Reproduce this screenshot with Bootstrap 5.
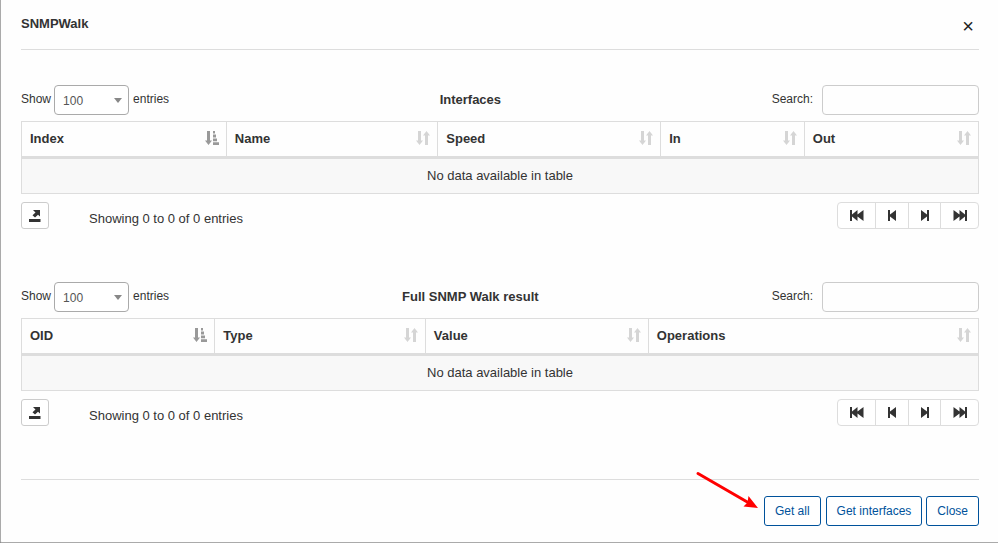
<!DOCTYPE html>
<html lang="en">
<head>
<meta charset="utf-8">
<meta name="viewport" content="width=device-width, initial-scale=1">
<title>SNMPWalk</title>
<link rel="stylesheet" href="https://cdn.jsdelivr.net/npm/bootstrap@5.3.0/dist/css/bootstrap.min.css">
<style>
  body { background: #666; color: #333; font: 13px/18px "Liberation Sans", Arial, sans-serif; }
  .dialog-pane { background: #fefefe; min-height: 100vh; padding: 0 19px 0 20px; border: 0 solid #aaa; border-width: 0 0 1px 1px; border-bottom-left-radius: 2px; }
  .dialog-head { height: 50px; border-bottom: 1px solid #ddd; }
  .dialog-head h1 { font-size: 13px; line-height: 18px; margin: 15px 0 0; font-weight: bold; }
  .dialog-x { border: 0; background: none; padding: 0; width: 22px; font-size: 20px; line-height: 20px; margin-top: 16px; color: #222; }
  .dialog-main { padding-top: 35px; }
  .walk-block { margin-bottom: 53px; }
  .walk-tools { font-size: 12px; margin-bottom: 6px; min-height: 30px; }
  .walk-tools label { line-height: 28px; }
  .walk-tools h2 { font-size: 13px; line-height: 18px; font-weight: bold; margin: 6px 0 0; }
  .walk-tools .form-select { width: 75px; height: 30px; margin: 0 4px 0 3px; font-size: 12px; line-height: 18px; padding: 6px 20px 4px 8px; border: 1px solid #aaa; border-radius: 4px; color: #555; background-color: #fff;
    background-image: url("data:image/svg+xml,%3Csvg xmlns='http://www.w3.org/2000/svg' viewBox='0 0 8 5'%3E%3Cpath d='M0 0h8L4 5z' fill='%23888'/%3E%3C/svg%3E"); background-size: 8px 5px; background-position: right 6px center; }
  .find-label { margin-right: 9px; }
  .walk-tools .form-control { width: 157px; height: 30px; padding: 4px 8px; font-size: 12px; border: 1px solid #ccc; border-radius: 4px; background: #fefefe; }
  .walk-table { width: 100%; margin: 0 0 8px; table-layout: fixed; border-collapse: separate; border-spacing: 0; border: 1px solid #ddd; border-width: 1px 0 0 1px; }
  .walk-table th, .walk-table td { height: 35px; padding: 8px; line-height: 18px; border: 0 solid #ddd; border-right-width: 1px; border-bottom-width: 1px; }
  .walk-table th { padding-right: 7px; border-bottom-width: 3px; }
  .walk-table td { background: #f8f8f8; text-align: center; }
  .sort-mark { width: 14px; height: 14px; margin-top: 1px; fill: #d5d5d5; display: block; }
  .sort-mark.is-active { fill: #999; }
  .tool-btn { border: 1px solid #ccc; background: #fff; width: 28px; height: 27px; padding: 0; border-radius: 3px; }
  .tool-btn svg, .pager-group svg { display: block; margin: auto; fill: #333; }
  .walk-info { margin: 8px 0 0 40px; }
  .pager-group .btn { height: 27px; padding: 0; border: 1px solid #ddd; background: #fff; border-radius: 4px; }
  .pager-end { width: 39px; } .pager-step { width: 34px; } .pager-next { width: 33px; }
  .dialog-foot { border-top: 1px solid #ddd; padding: 16px 0; gap: 4px; }
  .act-btn { height: 30px; padding: 0 10px; font-size: 12px; line-height: 28px; color: #00529b; border: 1px solid #00529b; border-radius: 3px; background: #fff; }
  .act-first { margin-right: 1px; }
  .pointer-arrow { right: calc(100% + 5px); bottom: 17px; width: 64px; height: 40px; pointer-events: none; }
</style>
<script src="https://cdn.jsdelivr.net/npm/bootstrap@5.3.0/dist/js/bootstrap.bundle.min.js"></script>
</head>
<body>
<svg class="d-none" aria-hidden="true">
  <symbol id="sort-asc" viewBox="0 0 14 14"><path d="M2 0h3v9.500h2L3.500 14 0 9.500h2zM8 0h2v2.500H8zM8 3.500h3v3H8zM8 7.500h4v2.700H8zM8 11.200h6V14H8z"/></symbol>
  <symbol id="sort-both" viewBox="0 0 14 14"><path d="M2 0h3v9.500h2L3.500 14 0 9.500h2zM9 14h3V4.500h2L10.500 0 7 4.500h2z"/></symbol>
  <symbol id="export" viewBox="0 0 12 12"><path d="M4 0h7v6.500L9 4.800 6 7.500 3.500 5.300 6.500 2.500zM0 9h11.500v3H0z"/></symbol>
  <symbol id="to-first" viewBox="0 0 14 11"><path d="M0 0h2v4.500L7.500 0v4.500L13.500 0v11L7.500 6.500V11L2 6.500V11H0z"/></symbol>
  <symbol id="to-prev" viewBox="0 0 8 11"><path d="M0 0h2v4.500L8 0v11L2 6.500V11H0z"/></symbol>
</svg>
<main class="dialog-pane d-flex flex-column">
  <header class="dialog-head d-flex justify-content-between align-items-start">
    <h1>SNMPWalk</h1>
    <button type="button" class="dialog-x" aria-label="Close dialog">×</button>
  </header>
  <div class="dialog-main flex-grow-1">
    <section class="walk-block">
      <div class="walk-tools d-flex align-items-start">
        <div class="d-flex"><label for="len1">Show</label><select id="len1" class="form-select"><option>100</option></select><label for="len1">entries</label></div>
        <h2 class="flex-grow-1 text-center">Interfaces</h2>
        <div class="d-flex"><label for="find1" class="find-label">Search:</label><input type="search" id="find1" class="form-control"></div>
      </div>
      <table class="walk-table">
        <colgroup><col style="width:21.4%"><col style="width:22.1%"><col style="width:23.3%"><col style="width:15%"><col style="width:18.2%"></colgroup>
        <thead><tr>
          <th><div class="d-flex justify-content-between align-items-start">Index<svg class="sort-mark is-active"><use href="#sort-asc"/></svg></div></th>
          <th><div class="d-flex justify-content-between align-items-start">Name<svg class="sort-mark"><use href="#sort-both"/></svg></div></th>
          <th><div class="d-flex justify-content-between align-items-start">Speed<svg class="sort-mark"><use href="#sort-both"/></svg></div></th>
          <th><div class="d-flex justify-content-between align-items-start">In<svg class="sort-mark"><use href="#sort-both"/></svg></div></th>
          <th><div class="d-flex justify-content-between align-items-start">Out<svg class="sort-mark"><use href="#sort-both"/></svg></div></th>
        </tr></thead>
        <tbody><tr><td colspan="5">No data available in table</td></tr></tbody>
      </table>
      <div class="d-flex align-items-start">
        <button type="button" class="tool-btn" aria-label="Export"><svg width="12" height="12"><use href="#export"/></svg></button>
        <div class="walk-info flex-grow-1">Showing 0 to 0 of 0 entries</div>
        <div class="btn-group pager-group" role="group" aria-label="Pages">
          <button type="button" class="btn pager-end" aria-label="First"><svg width="14" height="11"><use href="#to-first"/></svg></button>
          <button type="button" class="btn pager-step" aria-label="Previous"><svg width="8" height="11"><use href="#to-prev"/></svg></button>
          <button type="button" class="btn pager-next" aria-label="Next"><svg width="8" height="11"><use href="#to-prev" transform="matrix(-1 0 0 1 8 0)"/></svg></button>
          <button type="button" class="btn pager-end" aria-label="Last"><svg width="14" height="11"><use href="#to-first" transform="matrix(-1 0 0 1 14 0)"/></svg></button>
        </div>
      </div>
    </section>
    <section class="walk-block">
      <div class="walk-tools d-flex align-items-start">
        <div class="d-flex"><label for="len2">Show</label><select id="len2" class="form-select"><option>100</option></select><label for="len2">entries</label></div>
        <h2 class="flex-grow-1 text-center">Full SNMP Walk result</h2>
        <div class="d-flex"><label for="find2" class="find-label">Search:</label><input type="search" id="find2" class="form-control"></div>
      </div>
      <table class="walk-table">
        <colgroup><col style="width:20.2%"><col style="width:22%"><col style="width:23.3%"><col style="width:34.5%"></colgroup>
        <thead><tr>
          <th><div class="d-flex justify-content-between align-items-start">OID<svg class="sort-mark is-active"><use href="#sort-asc"/></svg></div></th>
          <th><div class="d-flex justify-content-between align-items-start">Type<svg class="sort-mark"><use href="#sort-both"/></svg></div></th>
          <th><div class="d-flex justify-content-between align-items-start">Value<svg class="sort-mark"><use href="#sort-both"/></svg></div></th>
          <th><div class="d-flex justify-content-between align-items-start">Operations<svg class="sort-mark"><use href="#sort-both"/></svg></div></th>
        </tr></thead>
        <tbody><tr><td colspan="4">No data available in table</td></tr></tbody>
      </table>
      <div class="d-flex align-items-start">
        <button type="button" class="tool-btn" aria-label="Export"><svg width="12" height="12"><use href="#export"/></svg></button>
        <div class="walk-info flex-grow-1">Showing 0 to 0 of 0 entries</div>
        <div class="btn-group pager-group" role="group" aria-label="Pages">
          <button type="button" class="btn pager-end" aria-label="First"><svg width="14" height="11"><use href="#to-first"/></svg></button>
          <button type="button" class="btn pager-step" aria-label="Previous"><svg width="8" height="11"><use href="#to-prev"/></svg></button>
          <button type="button" class="btn pager-next" aria-label="Next"><svg width="8" height="11"><use href="#to-prev" transform="matrix(-1 0 0 1 8 0)"/></svg></button>
          <button type="button" class="btn pager-end" aria-label="Last"><svg width="14" height="11"><use href="#to-first" transform="matrix(-1 0 0 1 14 0)"/></svg></button>
        </div>
      </div>
    </section>
  </div>
  <footer class="dialog-foot d-flex justify-content-end">
    <div class="act-first position-relative">
      <svg class="pointer-arrow position-absolute" viewBox="0 0 64 40" aria-hidden="true"><path d="M3 4.500L54 34" fill="none" stroke="#f00" stroke-width="3" stroke-linecap="round"/><path d="M63 39L48.500 37.500 52.500 33.500 53.500 27z" fill="#f00"/></svg>
      <button type="button" class="btn act-btn">Get all</button>
    </div>
    <button type="button" class="btn act-btn">Get interfaces</button>
    <button type="button" class="btn act-btn">Close</button>
  </footer>
</main>
</body>
</html>
